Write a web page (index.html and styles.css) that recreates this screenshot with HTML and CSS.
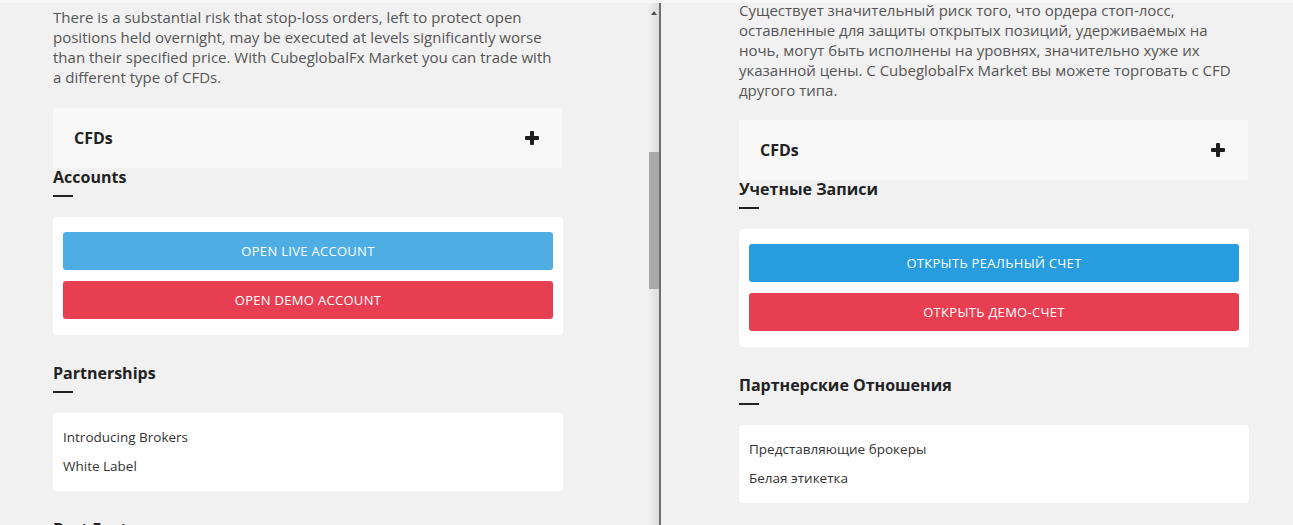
FILE: index.html
```html
<!DOCTYPE html>
<html lang="en">
<head>
<meta charset="utf-8">
<title>CubeglobalFx Market</title>
<link rel="stylesheet" href="styles.css">
</head>
<body>
<div class="split">
  <section class="pane pane-left">
    <div class="col col-left">
      <p class="intro">There is a substantial risk that stop-loss orders, left to protect open positions held overnight, may be executed at levels significantly worse than their specified price. With CubeglobalFx Market you can trade with a different type of CFDs.</p>
      <div class="accordion">
        <span class="acc-title">CFDs</span>
        <svg class="plus" width="14" height="14" viewBox="0 0 14 14"><rect x="5" y="0" width="4" height="14" rx="1"/><rect x="0" y="5" width="14" height="4" rx="1"/></svg>
      </div>
      <h3 class="heading">Accounts</h3>
      <div class="dash"></div>
      <div class="card card-buttons">
        <a class="btn btn-live">OPEN LIVE ACCOUNT</a>
        <a class="btn btn-demo">OPEN DEMO ACCOUNT</a>
      </div>
      <h3 class="heading heading-gap">Partnerships</h3>
      <div class="dash"></div>
      <div class="card card-links">
        <a class="link">Introducing Brokers</a>
        <a class="link">White Label</a>
      </div>
      <h3 class="heading heading-gap">Best Features</h3>
    </div>
  </section>
  <div class="scrollbar">
    <span class="arrow-up"></span>
    <span class="thumb"></span>
  </div>
  <div class="divider"></div>
  <section class="pane pane-right">
    <div class="col col-right">
      <p class="intro intro-ru">Существует значительный риск того, что ордера стоп-лосс, оставленные для защиты открытых позиций, удерживаемых на ночь, могут быть исполнены на уровнях, значительно хуже их указанной цены. С CubeglobalFx Market вы можете торговать с CFD другого типа.</p>
      <div class="accordion">
        <span class="acc-title">CFDs</span>
        <svg class="plus" width="14" height="14" viewBox="0 0 14 14"><rect x="5" y="0" width="4" height="14" rx="1"/><rect x="0" y="5" width="14" height="4" rx="1"/></svg>
      </div>
      <h3 class="heading">Учетные Записи</h3>
      <div class="dash"></div>
      <div class="card card-buttons">
        <a class="btn btn-live btn-live-ru">ОТКРЫТЬ РЕАЛЬНЫЙ СЧЕТ</a>
        <a class="btn btn-demo">ОТКРЫТЬ ДЕМО-СЧЕТ</a>
      </div>
      <h3 class="heading heading-gap">Партнерские Отношения</h3>
      <div class="dash"></div>
      <div class="card card-links">
        <a class="link">Представляющие брокеры</a>
        <a class="link">Белая этикетка</a>
      </div>
    </div>
  </section>
</div>
</body>
</html>
```
FILE: styles.css
```css
* { box-sizing: border-box; }
html, body { margin: 0; padding: 0; }
body {
  background: #f1f1f1;
  font-family: "Open Sans", "Noto Sans", sans-serif;
  color: #333;
  overflow: hidden;
  height: 525px;
}
.split {
  display: flex;
  height: 525px;
  border-top: 3px solid #f7f7f7;
}
.pane {
  background: #f1f1f1;
  overflow: hidden;
}
.pane-left { width: 648px; padding-left: 53px; }
.pane-right { flex: 1; padding-left: 78px; }
.col { width: 510px; }
.col-left { margin-top: 4px; }
.col-right { margin-top: -3px; }
.intro {
  margin: 0 0 21px;
  font-size: 15px;
  line-height: 20px;
  color: #555;
}
.intro-ru { margin-bottom: 20px; }
.accordion {
  height: 60px;
  background: #f8f8f8;
  display: flex;
  align-items: center;
  justify-content: space-between;
  padding: 0 23px 0 21px;
  margin-right: 1px;
}
.acc-title {
  font-size: 16px;
  font-weight: 700;
  color: #222;
}
.plus { fill: #1e1e1e; }
.heading {
  margin: 0;
  font-size: 16px;
  line-height: 18px;
  font-weight: 700;
  color: #222;
}
.heading-gap { margin-top: 29px; }
.dash {
  width: 20px;
  height: 2px;
  background: #222;
  margin-top: 9px;
  margin-bottom: 20px;
}
.card {
  background: #fff;
  border-radius: 4px;
}
.card-buttons {
  padding: 15px 10px 16px;
  display: flex;
  flex-direction: column;
  gap: 11px;
}
.btn {
  display: flex;
  align-items: center;
  justify-content: center;
  height: 38px;
  border-radius: 3px;
  color: #fff;
  font-size: 13px;
  letter-spacing: 0.3px;
  text-decoration: none;
}
.btn-live { background: #4eade3; }
.btn-live-ru { background: #279ddf; }
.btn-demo { background: #e83e52; }
.card-links {
  padding: 14px 10px 15px;
  display: flex;
  flex-direction: column;
  gap: 9px;
}
.link {
  font-size: 13.5px;
  line-height: 20px;
  color: #333;
}
.scrollbar {
  position: relative;
  width: 11px;
  background: linear-gradient(to right, #f1f1f1, #dcdcdc);
}
.arrow-up {
  position: absolute;
  left: 3px;
  top: 8px;
  width: 0;
  height: 0;
  border-left: 3px solid transparent;
  border-right: 3px solid transparent;
  border-bottom: 4px solid #505050;
}
.thumb {
  position: absolute;
  left: 1px;
  right: 0;
  top: 149px;
  height: 137px;
  background: #a9a9a9;
}
.divider {
  width: 2px;
  background: #6e6e6e;
}
```
